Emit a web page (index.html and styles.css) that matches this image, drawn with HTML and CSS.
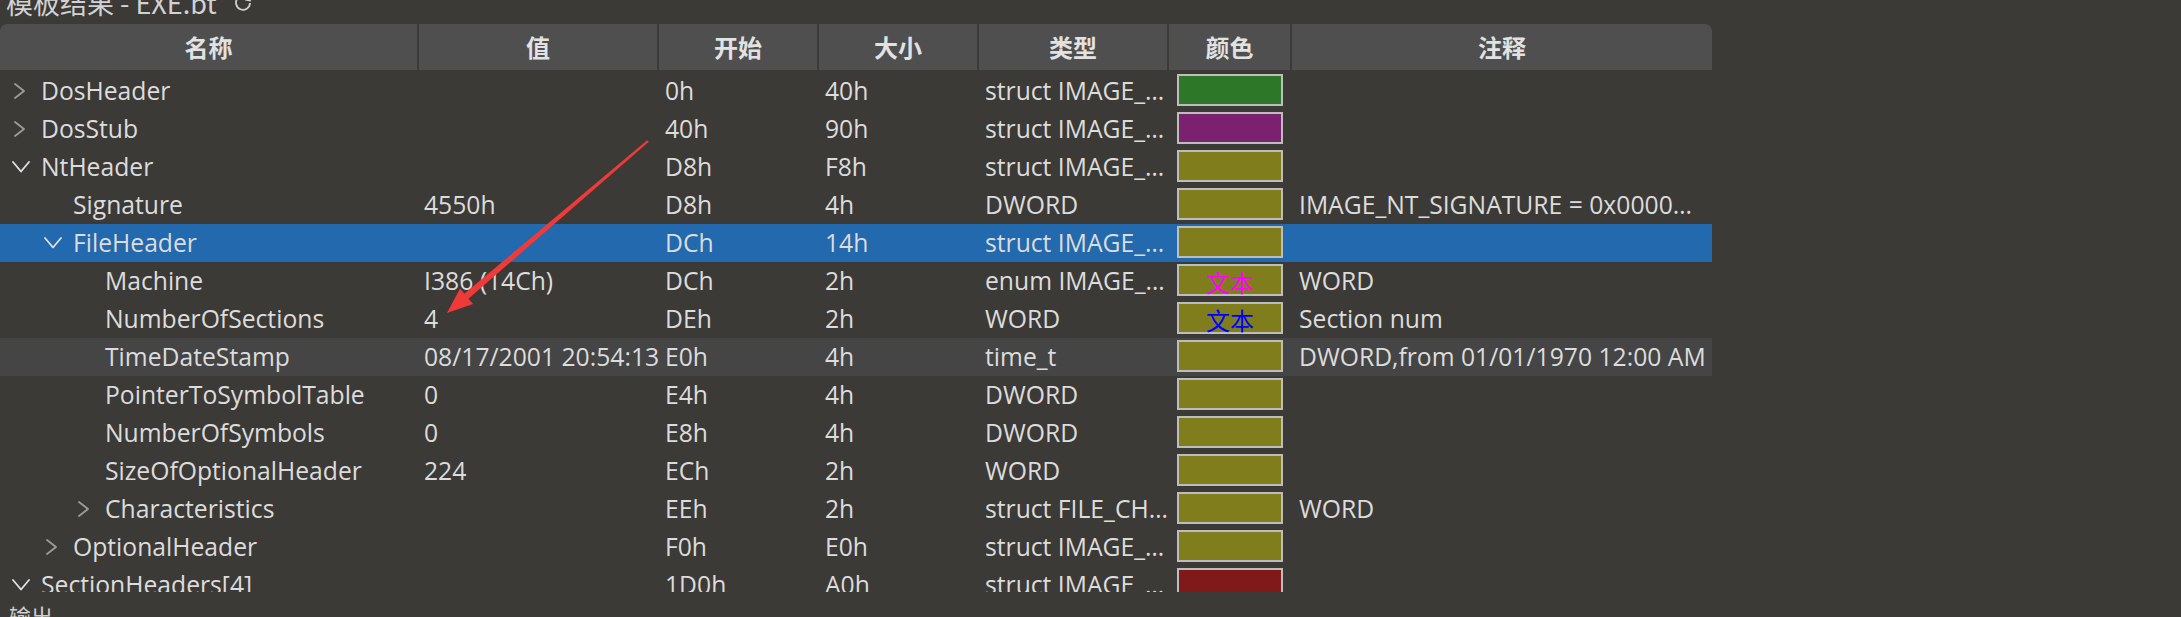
FILE: index.html
```html
<!DOCTYPE html>
<html lang="zh">
<head>
<meta charset="utf-8">
<title>模板结果 - EXE.bt</title>
<link rel="stylesheet" href="styles.css">
</head>
<body>
<div class="title">
  <span class="title-text">模板结果 - EXE.bt</span>
  <svg class="refresh" width="20" height="20" viewBox="0 0 20 20"><path d="M16.2 6.5 A7 7 0 1 0 17 10" fill="none" stroke="#cfcfcf" stroke-width="1.8"/><path d="M17.5 2.5 L17 7.5 L12.2 6.6" fill="none" stroke="#cfcfcf" stroke-width="1.8"/></svg>
</div>
<div class="tree">
  <div class="head">
    <div class="h">名称</div><div class="h">值</div><div class="h">开始</div><div class="h">大小</div><div class="h">类型</div><div class="h">颜色</div><div class="h last">注释</div>
  </div>
  <div class="body">
    <div class="row">
      <div class="name l0"><span class="chev"><svg class="cr" width="14" height="18" viewBox="0 0 14 18"><path d="M2 2 L11 9 L2 16"/></svg></span>DosHeader</div>
      <div class="val"></div><div class="c">0h</div><div class="c">40h</div><div class="c">struct IMAGE_…</div>
      <div class="sw"><span class="box green"></span></div><div class="cm"></div>
    </div>
    <div class="row">
      <div class="name l0"><span class="chev"><svg class="cr" width="14" height="18" viewBox="0 0 14 18"><path d="M2 2 L11 9 L2 16"/></svg></span>DosStub</div>
      <div class="val"></div><div class="c">40h</div><div class="c">90h</div><div class="c">struct IMAGE_…</div>
      <div class="sw"><span class="box purple"></span></div><div class="cm"></div>
    </div>
    <div class="row">
      <div class="name l0"><span class="chev"><svg class="cd" width="18" height="12" viewBox="0 0 18 12"><path d="M1 1 L9 10.5 L17 1"/></svg></span>NtHeader</div>
      <div class="val"></div><div class="c">D8h</div><div class="c">F8h</div><div class="c">struct IMAGE_…</div>
      <div class="sw"><span class="box olive"></span></div><div class="cm"></div>
    </div>
    <div class="row">
      <div class="name l1"><span class="chev"></span>Signature</div>
      <div class="val">4550h</div><div class="c">D8h</div><div class="c">4h</div><div class="c">DWORD</div>
      <div class="sw"><span class="box olive"></span></div><div class="cm">IMAGE_NT_SIGNATURE = 0x0000…</div>
    </div>
    <div class="row selected">
      <div class="name l1"><span class="chev"><svg class="cd" width="18" height="12" viewBox="0 0 18 12"><path d="M1 1 L9 10.5 L17 1"/></svg></span>FileHeader</div>
      <div class="val"></div><div class="c">DCh</div><div class="c">14h</div><div class="c">struct IMAGE_…</div>
      <div class="sw"><span class="box olive"></span></div><div class="cm"></div>
    </div>
    <div class="row">
      <div class="name l2"><span class="chev"></span>Machine</div>
      <div class="val">I386 (14Ch)</div><div class="c">DCh</div><div class="c">2h</div><div class="c">enum IMAGE_…</div>
      <div class="sw"><span class="box olive magenta">文本</span></div><div class="cm">WORD</div>
    </div>
    <div class="row">
      <div class="name l2"><span class="chev"></span>NumberOfSections</div>
      <div class="val">4</div><div class="c">DEh</div><div class="c">2h</div><div class="c">WORD</div>
      <div class="sw"><span class="box olive blue">文本</span></div><div class="cm">Section num</div>
    </div>
    <div class="row hover">
      <div class="name l2"><span class="chev"></span>TimeDateStamp</div>
      <div class="val">08/17/2001 20:54:13</div><div class="c">E0h</div><div class="c">4h</div><div class="c">time_t</div>
      <div class="sw"><span class="box olive"></span></div><div class="cm">DWORD,from 01/01/1970 12:00 AM</div>
    </div>
    <div class="row">
      <div class="name l2"><span class="chev"></span>PointerToSymbolTable</div>
      <div class="val">0</div><div class="c">E4h</div><div class="c">4h</div><div class="c">DWORD</div>
      <div class="sw"><span class="box olive"></span></div><div class="cm"></div>
    </div>
    <div class="row">
      <div class="name l2"><span class="chev"></span>NumberOfSymbols</div>
      <div class="val">0</div><div class="c">E8h</div><div class="c">4h</div><div class="c">DWORD</div>
      <div class="sw"><span class="box olive"></span></div><div class="cm"></div>
    </div>
    <div class="row">
      <div class="name l2"><span class="chev"></span>SizeOfOptionalHeader</div>
      <div class="val">224</div><div class="c">ECh</div><div class="c">2h</div><div class="c">WORD</div>
      <div class="sw"><span class="box olive"></span></div><div class="cm"></div>
    </div>
    <div class="row">
      <div class="name l2"><span class="chev"><svg class="cr" width="14" height="18" viewBox="0 0 14 18"><path d="M2 2 L11 9 L2 16"/></svg></span>Characteristics</div>
      <div class="val"></div><div class="c">EEh</div><div class="c">2h</div><div class="c">struct FILE_CH…</div>
      <div class="sw"><span class="box olive"></span></div><div class="cm">WORD</div>
    </div>
    <div class="row">
      <div class="name l1"><span class="chev"><svg class="cr" width="14" height="18" viewBox="0 0 14 18"><path d="M2 2 L11 9 L2 16"/></svg></span>OptionalHeader</div>
      <div class="val"></div><div class="c">F0h</div><div class="c">E0h</div><div class="c">struct IMAGE_…</div>
      <div class="sw"><span class="box olive"></span></div><div class="cm"></div>
    </div>
    <div class="row">
      <div class="name l0"><span class="chev"><svg class="cd" width="18" height="12" viewBox="0 0 18 12"><path d="M1 1 L9 10.5 L17 1"/></svg></span>SectionHeaders[4]</div>
      <div class="val"></div><div class="c">1D0h</div><div class="c">A0h</div><div class="c">struct IMAGE_…</div>
      <div class="sw"><span class="box red"></span></div><div class="cm"></div>
    </div>
  </div>
</div>
<div class="output">输出</div>
<svg class="arrow" width="2181" height="617" viewBox="0 0 2181 617">
  <polygon points="648.8,141.8 647.2,140.2 464,294 468.4,298.8" fill="#f03a3a"/>
  <polygon points="447,313 473,304 460,288.6" fill="#f03a3a"/>
</svg>
</body>
</html>
```
FILE: styles.css
```css
html, body {
  margin: 0;
  padding: 0;
}
body {
  background: #3c3a37;
  color: #dcdcdc;
  font-family: "Open Sans", "Noto Sans CJK SC", sans-serif;
  font-size: 24.7px;
  width: 2181px;
  height: 617px;
  overflow: hidden;
  position: relative;
}
.title {
  display: flex;
  align-items: center;
  height: 24px;
  margin-top: -9px;
  padding-left: 6px;
  line-height: 24px;
  font-size: 27px;
  color: #d2d2d2;
}
.title-text {
  font-family: "Noto Sans CJK SC", "Open Sans", sans-serif;
  white-space: nowrap;
}
.refresh {
  margin-left: 16px;
  flex: none;
}
.tree {
  margin-top: 9px;
  width: 1712px;
  height: 568px;
  overflow: hidden;
}
.head {
  display: grid;
  grid-template-columns: 419px 240px 160px 160px 190px 123px 420px;
  height: 46px;
  background: #4f4f4f;
  border-radius: 7px 7px 0 0;
  margin-bottom: 2px;
}
.h {
  box-sizing: border-box;
  border-right: 2px solid #3c3a37;
  text-align: center;
  line-height: 46px;
  font-family: "Noto Sans CJK SC", sans-serif;
  font-weight: 700;
  font-size: 24px;
  color: #e2e2e2;
}
.h.last {
  border-right: none;
}
.row {
  display: grid;
  grid-template-columns: 419px 240px 160px 160px 190px 123px 420px;
  height: 38px;
  line-height: 38px;
}
.row > div {
  box-sizing: border-box;
  overflow: hidden;
  white-space: nowrap;
  padding-left: 6px;
}
.row.selected {
  background: #2269ae;
}
.row.hover {
  background: #454545;
}
.row > .name {
  display: flex;
  align-items: center;
}
.row > .l0 { padding-left: 11px; }
.row > .l1 { padding-left: 43px; }
.row > .l2 { padding-left: 75px; }
.chev {
  width: 30px;
  flex: none;
  display: flex;
  align-items: center;
}
.chev svg path {
  fill: none;
  stroke-width: 1.8;
  stroke-linecap: round;
  stroke-linejoin: round;
}
.cr {
  margin-left: 2px;
}
.cr path {
  stroke: #9c9c9c;
}
.cd {
  margin-left: 1px;
}
.cd path {
  stroke: #e2e2e2;
}
.row > .val {
  padding-left: 5px;
}
.row > .cm {
  padding-left: 7px;
}
.row > .sw {
  padding-left: 8px;
}
.box {
  box-sizing: border-box;
  display: flex;
  align-items: center;
  justify-content: center;
  width: 106px;
  height: 32px;
  margin-top: 2px;
  border: 2px solid #bdbdbd;
  font-family: "Noto Sans CJK SC", sans-serif;
  font-size: 24px;
  line-height: 26px;
  padding-top: 3px;
}
.green { background: #2c7828; }
.purple { background: #7a2270; }
.olive { background: #7f7d1c; }
.red { background: #801a1a; }
.magenta { color: #ff00ff; }
.blue { color: #0000ff; }
.output {
  margin-top: 10px;
  padding-left: 9px;
  font-family: "Noto Sans CJK SC", sans-serif;
  font-size: 22px;
  line-height: 26px;
  color: #cfcfcf;
}
.arrow {
  position: absolute;
  left: 0;
  top: 0;
  pointer-events: none;
}
```
